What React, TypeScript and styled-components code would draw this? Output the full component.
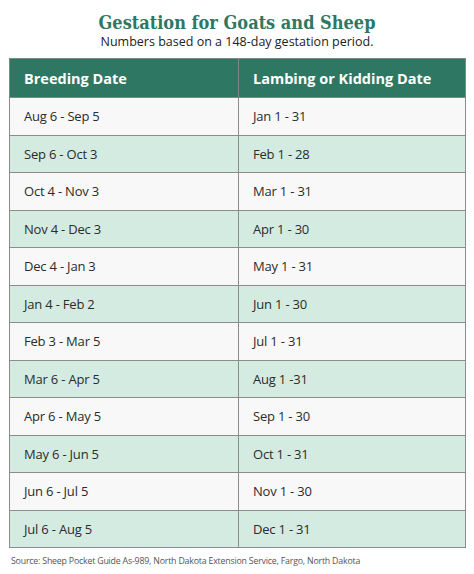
import React from "react";
import styled, { createGlobalStyle } from "styled-components";

const GlobalStyle = createGlobalStyle`
  body {
    margin: 0;
    background: #ffffff;
    font-family: "Open Sans", "Liberation Sans", sans-serif;
  }
`;

const Page = styled.div`
  width: 474px;
  height: 574px;
  overflow: hidden;
  background: #ffffff;
`;

const Heading = styled.header`
  text-align: center;
  padding-top: 14px;
  margin-bottom: 9px;
`;

const Title = styled.h1`
  margin: 0 0 3px;
  font-family: "DejaVu Serif", "Liberation Serif", serif;
  font-stretch: condensed;
  font-weight: 700;
  font-size: 18px;
  line-height: 18px;
  color: #2e7762;
`;

const Subtitle = styled.p`
  margin: 0;
  font-size: 12.5px;
  line-height: 14px;
  color: #222222;
`;

const Table = styled.table`
  margin: 0 8px 0 9px;
  width: 457px;
  border-collapse: collapse;
  table-layout: fixed;
`;

const HeadCell = styled.th`
  height: 39px;
  padding: 0 0 0 14px;
  box-sizing: border-box;
  background: #2e7762;
  color: #ffffff;
  font-size: 14.5px;
  font-weight: 700;
  text-align: left;
  border: 1px solid #7f8a86;
`;

const Row = styled.tr<{ $shaded: boolean }>`
  background: ${(p) => (p.$shaded ? "#d4ebe2" : "#f8f8f8")};
`;

const Cell = styled.td`
  height: 37.5px;
  padding: 0 0 0 14px;
  box-sizing: border-box;
  font-size: 13px;
  letter-spacing: -0.2px;
  color: #2b2b2b;
  border: 1px solid #8c8c8c;
`;

const Source = styled.p`
  margin: 7px 0 0 11px;
  font-size: 8.8px;
  letter-spacing: -0.2px;
  color: #555555;
`;

const rows: [string, string][] = [
  ["Aug 6 - Sep 5", "Jan 1 - 31"],
  ["Sep 6 - Oct 3", "Feb 1 - 28"],
  ["Oct 4 - Nov 3", "Mar 1 - 31"],
  ["Nov 4 - Dec 3", "Apr 1 - 30"],
  ["Dec 4 - Jan 3", "May 1 - 31"],
  ["Jan 4 - Feb 2", "Jun 1 - 30"],
  ["Feb 3 - Mar 5", "Jul 1 - 31"],
  ["Mar 6 - Apr 5", "Aug 1 -31"],
  ["Apr 6 - May 5", "Sep 1 - 30"],
  ["May 6 - Jun 5", "Oct 1 - 31"],
  ["Jun 6 - Jul 5", "Nov 1 - 30"],
  ["Jul 6 - Aug 5", "Dec 1 - 31"],
];

export default function App() {
  return (
    <Page>
      <GlobalStyle />
      <Heading>
        <Title>Gestation for Goats and Sheep</Title>
        <Subtitle>Numbers based on a 148-day gestation period.</Subtitle>
      </Heading>
      <Table>
        <colgroup>
          <col style={{ width: "229px" }} />
          <col />
        </colgroup>
        <thead>
          <tr>
            <HeadCell>Breeding Date</HeadCell>
            <HeadCell>Lambing or Kidding Date</HeadCell>
          </tr>
        </thead>
        <tbody>
          {rows.map(([breed, birth], i) => (
            <Row key={breed} $shaded={i % 2 === 1}>
              <Cell>{breed}</Cell>
              <Cell>{birth}</Cell>
            </Row>
          ))}
        </tbody>
      </Table>
      <Source>
        Source: Sheep Pocket Guide As-989, North Dakota Extension Service,
        Fargo, North Dakota
      </Source>
    </Page>
  );
}
